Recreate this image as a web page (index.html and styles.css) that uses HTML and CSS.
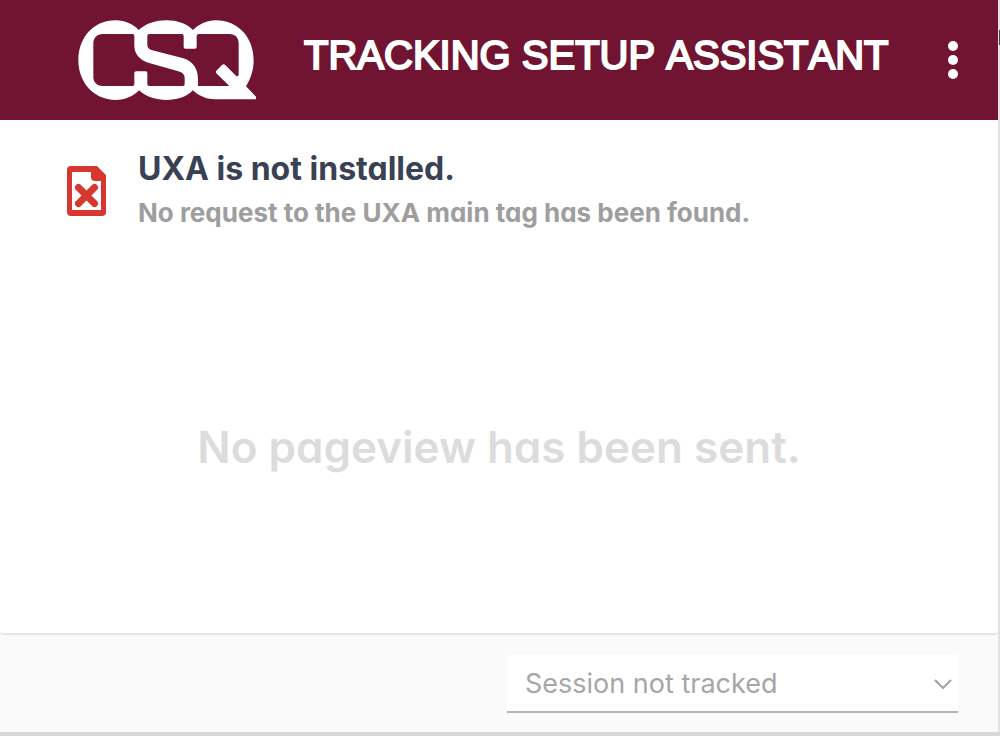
FILE: index.html
```html
<!DOCTYPE html>
<html lang="en">
<head>
<meta charset="utf-8">
<meta name="viewport" content="width=device-width, initial-scale=1">
<title>Tracking Setup Assistant</title>
<link rel="stylesheet" href="styles.css">
</head>
<body>
<div class="app">
  <header class="header">
    <svg class="logo" viewBox="24 29 537 242" role="img" aria-label="CSQ">
      <path class="logo-shape" d="M137 30C165 30 190 42 206 59C228 40 255 30 290 30C322 30 350 40 369 59C388 41 412 30 437 30C505 30 551 82 551 150C551 178 543 205 528 228L558 259V267H437C410 267 385 257 369 240C350 260 322 269 290 269C258 269 228 260 207 240C190 258 165 269 137 269C70 269 25 215 25 150C25 82 70 30 137 30Z"/>
      <path class="logo-cut" d="M98 71H188q5 0 5 5V107C193 135 215 152 240 159L325 183Q344 188 344 203V222q0 5-5 5H237q-5 0-5-5V188q0-5-5-5H198q-5 0-5 5V222q0 5-5 5H98C80 227 70 215 70 200V99C70 82 82 71 98 71Z"/>
      <path class="logo-cut" d="M238 71H335q6 0 6 6V110q0 5 5 5H375q5 0 5-5V77q0-6 6-6H478C496 71 506 82 506 99V193q-2 8-8 3L465 163q-5-3-9 1L439 181q-3 4 0 8L478 227H384V205C384 175 368 153 340 144L247 120Q232 116 232 104V77q0-6 6-6Z"/>
    </svg>
    <h1 class="title">TRACKING SETUP ASSISTANT</h1>
    <button class="menu" type="button" aria-label="Menu">
      <svg class="menu-icon" viewBox="0 0 10 38" aria-hidden="true"><circle cx="5" cy="5" r="5"/><circle cx="5" cy="19" r="5"/><circle cx="5" cy="33" r="5"/></svg>
    </button>
  </header>
  <main class="main">
    <section class="status">
      <svg class="status-icon" viewBox="0 0 39 50" aria-hidden="true">
        <path fill-rule="evenodd" d="M4 0H30L39 9V46Q39 50 35 50H4Q0 50 0 46V4Q0 0 4 0ZM5 6V44H34V15H28Q24 15 24 11V6Z"/>
        <path class="cross" d="M11.500 21.500L27.500 37.500M27.500 21.500L11.500 37.500"/>
      </svg>
      <div>
        <h2 class="status-title">UXA is not installed.</h2>
        <p class="status-text">No request to the UXA main tag has been found.</p>
      </div>
    </section>
    <p class="empty">No pageview has been sent.</p>
  </main>
  <footer class="footer">
    <div class="picker">
      <select class="session" aria-label="Session tracking">
        <option>Session not tracked</option>
      </select>
      <svg class="chevron" viewBox="0 0 18 10" aria-hidden="true"><path d="M1 1L9 9L17 1"/></svg>
    </div>
  </footer>
</div>
</body>
</html>
```
FILE: styles.css
```css
* { box-sizing: border-box; }
body {
  margin: 0;
  min-height: 100vh;
  display: flex;
  padding: 0 2px 4px 0;
  background: linear-gradient(#d6d9d8, #d6d9d8) bottom / 100% 4px no-repeat,
    linear-gradient(#444, #444) right 30px / 1px 15px no-repeat, #e2e2e2;
  font-family: Inter, "Liberation Sans", sans-serif;
}
h1, h2, p { margin: 0; }
.app { flex: 1; display: flex; flex-direction: column; background: #fafafa; }
.header {
  display: flex;
  align-items: center;
  height: 120px;
  padding: 0 32px 0 78px;
  background: #701431;
}
.logo { width: 179px; flex: none; }
.logo-shape { fill: #fff; }
.logo-cut { fill: #701431; }
.title {
  flex: 1;
  margin-left: 47px;
  padding-bottom: 10px;
  color: #fff;
  font: 400 40px/48px "Liberation Sans", Arial, sans-serif;
  font-kerning: none;
  white-space: nowrap;
  -webkit-text-stroke: 2px #fff;
}
.menu {
  display: flex;
  padding: 8px;
  border: 0;
  background: none;
  cursor: pointer;
}
.menu-icon { width: 10px; height: 38px; fill: #fff; }
.main {
  flex: 1;
  display: flex;
  flex-direction: column;
  background: #fff;
  border-bottom: 2px solid #e6e6e6;
  border-radius: 0 0 4px 4px;
}
.status { display: flex; align-items: center; gap: 32px; padding: 27px 67px 0; }
.status-icon { flex: none; width: 39px; height: 50px; fill: #d63830; }
.cross { fill: none; stroke: #d63830; stroke-width: 7; stroke-linecap: round; }
.status-title {
  color: #394154;
  font-size: 32px;
  font-weight: 700;
  line-height: 44px;
  font-feature-settings: "cv11";
}
.status-text {
  color: #9e9e9e;
  font-size: 26px;
  font-weight: 700;
  line-height: 44px;
  font-feature-settings: "cv11";
}
.empty {
  margin: auto;
  padding-bottom: 96px;
  padding-top: 122px;
  color: #dcdcdc;
  font-size: 44px;
  font-weight: 600;
  line-height: 56px;
  font-feature-settings: "cv11";
}
.footer { display: flex; justify-content: flex-end; padding: 20px 40px 19px; }
.picker { position: relative; width: 451px; }
.session {
  display: block;
  width: 100%;
  height: 58px;
  padding: 2px 48px 0 18px;
  appearance: none;
  border: 0;
  border-bottom: 2px solid #b5b5b5;
  border-radius: 0;
  background: #fff;
  color: #a6a6a6;
  font: 400 27px/32px Inter, "Liberation Sans", sans-serif;
}
.chevron {
  position: absolute;
  right: 6px;
  top: 24px;
  width: 18px;
  height: 10px;
  fill: none;
  stroke: #a0a0a0;
  stroke-width: 2;
  pointer-events: none;
}
```
